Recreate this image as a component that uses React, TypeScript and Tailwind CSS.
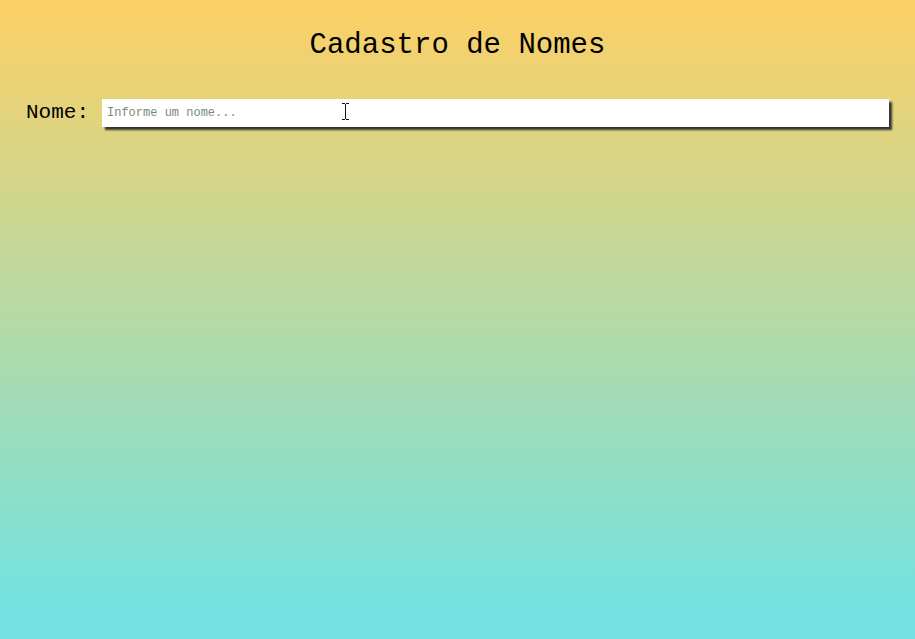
import React from "react";

export default function App() {
  return (
    <div
      className="relative w-full h-[639px] overflow-hidden bg-[linear-gradient(to_bottom,#fdd065_0%,#73e2e0_95%,#73e2e0_100%)]"
      style={{ fontFamily: "'Liberation Mono', 'DejaVu Sans Mono', monospace" }}
    >
      <h1 className="pt-[28px] text-center text-[29px] leading-[36px] text-black">
        Cadastro de Nomes
      </h1>
      <div className="mt-[35px] flex items-center gap-[13px] pl-[26px] pr-[26px]">
        <label className="text-[21px] leading-[28px] text-black">Nome:</label>
        <input
          type="text"
          placeholder="Informe um nome..."
          className="h-[28px] flex-1 bg-white px-[5px] text-[12px] text-black outline-none shadow-[3px_3px_2px_#333] placeholder:text-[#7b8a78]"
          style={{ fontFamily: "'Liberation Mono', 'DejaVu Sans Mono', monospace" }}
        />
      </div>
      <svg
        className="absolute left-[341px] top-[103px]"
        width="9"
        height="17"
        viewBox="0 0 9 17"
      >
        <path d="M1 0.5h3M5 0.5h3M4.5 1v15M1 16.5h3M5 16.5h3" stroke="#111" strokeWidth="1" fill="none" />
      </svg>
    </div>
  );
}
